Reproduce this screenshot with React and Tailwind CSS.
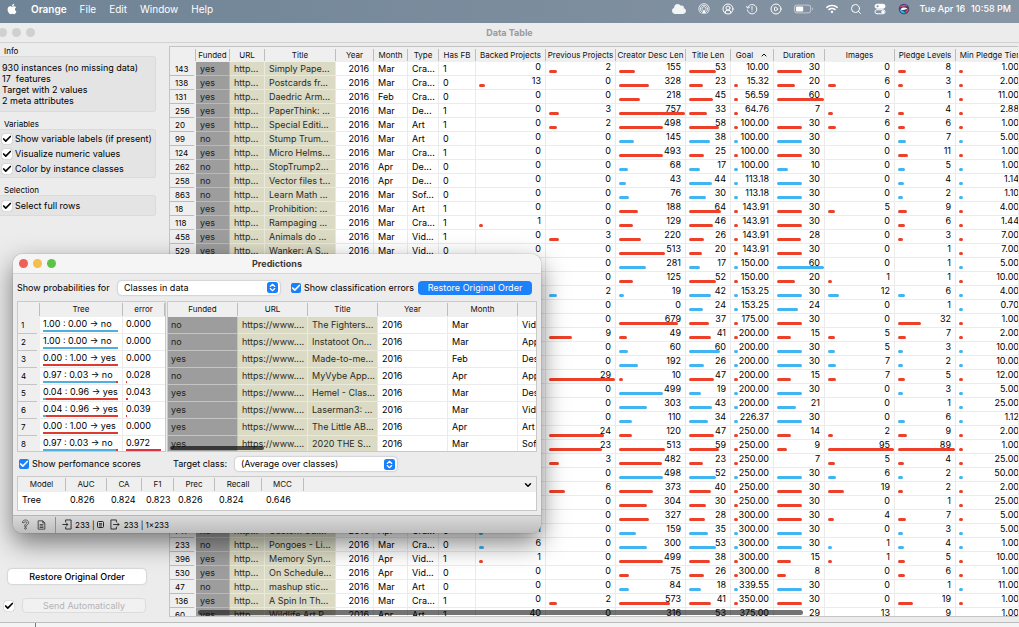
import React from 'react';
import { FaApple, FaCloud, FaWifi } from 'react-icons/fa';
import { Search, CirclePlay, CircleUserRound, Check, ChevronDown, ChevronUp } from 'lucide-react';

const RED = 'bg-[#ee4028]';
const BLUE = 'bg-[#41b4f2]';

// [backed, previous, creator length, title length, goal, duration, images, pledge levels, min tier, class]
const NUMBERS = [
  [0, 2, 155, 53, '10.00', 30, 0, 8, '1.00', 'r'],
  [13, 0, 328, 23, '15.32', 20, 6, 3, '2.00', 'r'],
  [0, 0, 218, 45, '56.59', 60, 0, 1, '11.00', 'r'],
  [0, 3, 757, 33, '64.76', 7, 2, 4, '2.88', 'r'],
  [0, 2, 498, 58, '100.00', 30, 6, 6, '1.00', 'r'],
  [0, 0, 145, 38, '100.00', 30, 0, 7, '5.00', 'b'],
  [0, 0, 493, 25, '100.00', 30, 0, 11, '1.00', 'r'],
  [0, 0, 68, 17, '100.00', 10, 0, 5, '1.00', 'b'],
  [0, 0, 43, 44, '113.18', 30, 0, 4, '1.14', 'b'],
  [0, 0, 76, 30, '113.18', 30, 0, 2, '1.10', 'b'],
  [0, 0, 188, 64, '143.91', 30, 5, 9, '4.00', 'r'],
  [1, 0, 129, 46, '143.91', 30, 0, 6, '1.44', 'r'],
  [0, 3, 220, 26, '143.91', 28, 0, 3, '7.00', 'r'],
  [0, 0, 513, 20, '143.91', 30, 0, 1, '7.00', 'r'],
  ['', 0, 281, 17, '150.00', 60, 0, 1, '5.00', 'b'],
  ['', 0, 125, 52, '150.00', 20, 1, 1, '10.00', 'r'],
  ['', 2, 19, 42, '153.25', 30, 12, 6, '4.00', 'b'],
  ['', 0, 0, 24, '153.25', 24, 0, 1, '0.70', 'b'],
  ['', 0, 679, 37, '175.00', 30, 0, 32, '1.00', 'r'],
  ['', 9, 49, 41, '200.00', 15, 5, 7, '2.00', 'r'],
  ['', 0, 60, 60, '200.00', 30, 5, 3, '10.00', 'b'],
  ['', 0, 192, 26, '200.00', 30, 7, 2, '10.00', 'b'],
  ['', 29, 10, 47, '200.00', 15, 7, 5, '12.00', 'r'],
  ['', 0, 499, 19, '200.00', 30, 0, 3, '5.00', 'b'],
  ['', 0, 303, 43, '200.00', 21, 0, 1, '25.00', 'b'],
  ['', 0, 110, 34, '226.37', 30, 0, 6, '1.12', 'b'],
  ['', 24, 120, 47, '250.00', 14, 2, 9, '2.00', 'r'],
  ['', 23, 513, 59, '250.00', 9, 95, 89, '1.00', 'r'],
  ['', 3, 482, 23, '250.00', 7, 5, 4, '25.00', 'r'],
  ['', 0, 498, 52, '250.00', 30, 6, 2, '50.00', 'b'],
  ['', 6, 373, 40, '250.00', 30, 19, 2, '2.00', 'r'],
  ['', 0, 304, 30, '250.00', 30, 0, 1, '25.00', 'r'],
  ['', 0, 327, 28, '300.00', 30, 4, 7, '5.00', 'r'],
  [1, 0, 159, 35, '300.00', 30, 0, 3, '5.00', 'b'],
  [6, 0, 300, 53, '300.00', 30, 1, 4, '1.00', 'b'],
  [1, 0, 499, 38, '300.00', 15, 1, 5, '10.00', 'r'],
  [0, 0, 75, 26, '300.00', 8, 0, 6, '1.00', 'r'],
  [0, 0, 84, 18, '339.55', 30, 0, 1, '11.00', 'b'],
  [0, 2, 573, 41, '350.00', 30, 0, 19, '1.00', 'r'],
  [40, 0, 316, 53, '375.00', 29, 13, 9, '1.00', 'r'],
];

// Row index -> [number, funded, url, title, year, month, type, has FB]
const LABELS = {
  0: ['143', 'yes', 'http...', 'Simply Pape...', '2016', 'Mar', 'Cra...', '1'],
  1: ['138', 'yes', 'http...', 'Postcards fr...', '2016', 'Mar', 'Cra...', '0'],
  2: ['131', 'yes', 'http...', 'Daedric Arm...', '2016', 'Feb', 'Cra...', '0'],
  3: ['256', 'yes', 'http...', 'PaperThink: ...', '2016', 'Mar', 'De...', '1'],
  4: ['20', 'yes', 'http...', 'Special Editi...', '2016', 'Mar', 'Art', '1'],
  5: ['99', 'no', 'http...', 'Stump Trum...', '2016', 'Mar', 'Art', '0'],
  6: ['124', 'yes', 'http...', 'Micro Helms...', '2016', 'Mar', 'Cra...', '1'],
  7: ['262', 'no', 'http...', 'StopTrump2...', '2016', 'Apr', 'De...', '0'],
  8: ['258', 'no', 'http...', 'Vector files t...', '2016', 'Apr', 'De...', '0'],
  9: ['863', 'no', 'http...', 'Learn Math ...', '2016', 'Mar', 'Sof...', '0'],
  10: ['18', 'yes', 'http...', 'Prohibition: ...', '2016', 'Mar', 'Art', '1'],
  11: ['118', 'yes', 'http...', 'Rampaging ...', '2016', 'Mar', 'Cra...', '1'],
  12: ['458', 'yes', 'http...', 'Animals do ...', '2016', 'Mar', 'Vid...', '1'],
  13: ['529', 'yes', 'http...', 'Wanker: A S...', '2016', 'Mar', 'Vid...', '0'],
  33: ['747', 'no', 'http...', 'Custom Gui...', '2016', 'Apr', 'Cra...', '0'],
  34: ['233', 'no', 'http...', 'Pongoes - Li...', '2016', 'Mar', 'Cra...', '0'],
  35: ['396', 'yes', 'http...', 'Memory Syn...', '2016', 'Apr', 'Vid...', '1'],
  36: ['530', 'yes', 'http...', 'On Schedule...', '2016', 'Apr', 'Vid...', '0'],
  37: ['47', 'no', 'http...', 'mashup stic...', '2016', 'Mar', 'Art', '0'],
  38: ['136', 'yes', 'http...', 'A Spin In Th...', '2016', 'Mar', 'Cra...', '1'],
  39: ['60', 'yes', 'http...', 'Wildlife Art P...', '2016', 'Apr', 'Art', '1'],
};

// Bar scale per numeric column: lowest value (no bar), highest value, full bar length
const SCALES = [
  [0, 290, 62],
  [0, 29, 62],
  [0, 757, 62],
  [0, 136, 61],
  [10, 100000, 35],
  [7, 60, 43],
  [0, 95, 62],
  [1, 89, 53],
  [0, 10000, 62],
];

const COLUMNS = [
  ['', 'w-[26px]'],
  ['Funded', 'w-[34px]'],
  ['URL', 'w-[35px]'],
  ['Title', 'w-[71px]'],
  ['Year', 'w-[38px]'],
  ['Month', 'w-[34px]'],
  ['Type', 'w-[31px]'],
  ['Has FB', 'w-[37px]'],
  ['Backed Projects', 'w-[70px]'],
  ['Previous Projects', 'w-[70px]'],
  ['Creator Desc Len', 'w-[70px]'],
  ['Title Len', 'w-[45px]'],
  ['Goal', 'w-[43px]'],
  ['Duration', 'w-[51px]'],
  ['Images', 'w-[70px]'],
  ['Pledge Levels', 'w-[61px]'],
  ['Min Pledge Tier', 'w-[68px]'],
];

function AirDrop() {
  return (
    <svg viewBox="0 0 24 24" className="size-3" fill="none" stroke="currentColor" strokeWidth="1.6" strokeLinecap="round">
      <path d="M6 20.5A10.5 10.5 0 1 1 18 20.5M7.5 17.5a7.3 7.3 0 1 1 9 0M9.3 14.8a4.2 4.2 0 1 1 5.4 0" />
      <path d="M12 13l4.5 8h-9z" fill="currentColor" stroke="none" />
    </svg>
  );
}

function TimeMachine() {
  return (
    <svg viewBox="0 0 24 24" className="size-3" fill="none" stroke="currentColor" strokeWidth="1.8" strokeLinecap="round">
      <path d="M3.5 9A9.3 9.3 0 1 1 3 14" strokeDasharray="3 1.2" />
      <path d="M1 7l2.5 3.5L7 8.5M12 7v6M12 16v.5" />
    </svg>
  );
}

function Battery() {
  return (
    <svg viewBox="0 0 36 18" className="h-2.5 w-5" fill="none">
      <rect x="1" y="2" width="29" height="14" rx="4" stroke="currentColor" strokeOpacity=".6" strokeWidth="1.6" />
      <rect x="3.5" y="4.5" width="13" height="9" rx="2" fill="currentColor" />
      <path d="M32.5 6.5c2 .7 2 4.3 0 5z" fill="currentColor" fillOpacity=".6" />
    </svg>
  );
}

function ControlCenter() {
  return (
    <svg viewBox="0 0 24 24" className="size-3" fill="none" stroke="currentColor" strokeWidth="2">
      <rect x="2" y="2.5" width="20" height="8" rx="4" fill="currentColor" />
      <circle cx="7" cy="6.5" r="2.2" fill="#8392a0" stroke="none" />
      <rect x="2" y="13.5" width="20" height="8" rx="4" />
      <circle cx="17.5" cy="17.5" r="3" fill="currentColor" stroke="none" />
    </svg>
  );
}

function Siri() {
  return (
    <svg viewBox="0 0 24 24" className="size-3">
      <circle cx="12" cy="12" r="10.5" fill="#3c4270" />
      <path d="M3 9c4-7 13-7 17-2-5-1-10 1-17 2z" fill="#e2457c" />
      <path d="M3 13c2 7 9 9 13 7-4-1-5-6-13-7z" fill="#30b7d8" />
      <path d="M21 11c0 5-3 8-6 9 0-4 2-7 6-9z" fill="#e0445a" />
      <path d="M5 13c3-5 9-5 14-2-4 1-6 5-14 2z" fill="#fff" />
    </svg>
  );
}

function MenuBar() {
  return (
    <header className="flex h-[23px] shrink-0 items-center bg-linear-to-r from-[#6f8496] to-[#8795a4] pr-2 pb-[5px] pl-[6px] text-[10px] text-white">
      <FaApple className="size-3" />
      <nav className="ml-[13px] flex gap-[13px]">
        <button className="font-semibold">Orange</button>
        <button>File</button>
        <button>Edit</button>
        <button>Window</button>
        <button>Help</button>
      </nav>
      <div className="ml-auto flex items-center">
        <div className="mr-[10px] flex items-center gap-3">
          <FaCloud className="h-3 w-3.5 opacity-90" />
          <AirDrop />
          <CircleUserRound className="size-3" />
          <TimeMachine />
          <CirclePlay className="size-3" />
          <Battery />
          <FaWifi className="size-3" />
          <Search className="size-3" />
          <ControlCenter />
          <Siri />
        </div>
        <time className="flex gap-1.5 text-[9px] font-medium">
          <span>Tue Apr 16</span>
          <span>10:58 PM</span>
        </time>
      </div>
    </header>
  );
}

function PlainCheck({ id, labelledBy }) {
  return (
    <span className="grid size-[10px] shrink-0">
      <input
        id={id}
        type="checkbox"
        defaultChecked
        aria-labelledby={labelledBy}
        className="[grid-area:1/1] size-[10px] appearance-none rounded-[2px] bg-white shadow-[0_0_1px_rgba(0,0,0,0.5)]"
      />
      <Check className="pointer-events-none [grid-area:1/1] size-[10px] text-black" strokeWidth={4} />
    </span>
  );
}

function BlueCheck({ id }) {
  return (
    <span className="grid size-[10px] shrink-0">
      <input id={id} type="checkbox" defaultChecked className="[grid-area:1/1] size-[10px] appearance-none rounded-[2px] bg-[#1a7ffb]" />
      <Check className="pointer-events-none [grid-area:1/1] size-[10px] text-white" strokeWidth={4} />
    </span>
  );
}

function SideOption({ id, children }) {
  return (
    <div className="flex h-[15px] items-center gap-[3px]">
      <PlainCheck id={id} />
      <label htmlFor={id}>{children}</label>
    </div>
  );
}

function Sidebar() {
  const box = 'rounded-r-[3px] border border-l-0 border-[#dadada] bg-[#e4e4e4] pl-[2px]';
  const heading = 'pl-1 text-[8px] leading-[10px]';
  return (
    <aside className="flex w-[169px] shrink-0 flex-col pt-[3px] pr-[13px] pb-[9px] text-[9px]">
      <h2 className={heading}>Info</h2>
      <div className={`${box} pt-[5px] pb-[5px] leading-[11px]`}>
        <p>930 instances (no missing data)</p>
        <p>17&nbsp; features</p>
        <p>Target with 2 values</p>
        <p>2 meta attributes</p>
      </div>
      <h2 className={`${heading} mt-[7px]`}>Variables</h2>
      <div className={`${box} py-px`}>
        <SideOption id="labels">Show variable labels (if present)</SideOption>
        <SideOption id="visualize">Visualize numeric values</SideOption>
        <SideOption id="color">Color by instance classes</SideOption>
      </div>
      <h2 className={`${heading} mt-[7px]`}>Selection</h2>
      <div className={`${box} py-[2px]`}>
        <SideOption id="fullrows">Select full rows</SideOption>
      </div>
      <div className="mt-auto pr-[10px] pl-1">
        <div className="pl-1">
          <button className="h-[15px] w-full rounded-[4px] bg-white font-medium shadow-[0_0_2px_rgba(0,0,0,0.3)]">Restore Original Order</button>
        </div>
        <div className="mt-[14px] flex items-center gap-2">
          <PlainCheck id="auto" labelledBy="send" />
          <button id="send" disabled className="h-[15px] flex-1 rounded-[4px] border border-[#dcdcdc] bg-[#f1f1f1] text-[#b4b4b4]">
            Send Automatically
          </button>
        </div>
      </div>
    </aside>
  );
}

function NumberCell({ value, scale, kind }) {
  const n = Number(value);
  const [low, high, length] = scale;
  const shown = value !== '' && n > low;
  return (
    <td className="h-[14px] border-r border-b border-[#ebebeb] bg-white p-0">
      <div className="relative h-[13px] pr-[4px] text-right leading-[10px]">
        {shown && (
          <span
            className={`absolute top-2 left-[3px] h-[3px] rounded-full ${kind === 'r' ? RED : BLUE}`}
            style={{ width: Math.round(3.6 + (n / high) * length) }}
          />
        )}
        <span className="relative">{value}</span>
      </div>
    </td>
  );
}

function DataTable() {
  const plain = 'h-[14px] overflow-hidden border-r border-b border-[#ebebeb] bg-white p-0 pl-[4px] leading-[13px]';
  const meta = 'h-[14px] overflow-hidden border-r border-b border-[#e9e9dc] bg-[#dadac5] p-0 pl-[4px] leading-[13px] text-[#2c2c26]';
  return (
    <table className="w-[854px] table-fixed border-separate border-spacing-0 text-left text-[9px] whitespace-nowrap">
      <colgroup>
        {COLUMNS.map(([name, width], i) => (
          <col key={i} className={width} />
        ))}
      </colgroup>
      <thead>
        <tr className="text-[8px]">
          {COLUMNS.map(([name], i) => (
            <th key={i} className="h-[15px] bg-[#efefef] p-0 text-center font-normal text-[#111]">
              <div className="flex h-[12px] items-center justify-center gap-[7px] border-r border-[#bdbdbd]">
                {name}
                {name === 'Goal' && <ChevronUp className="size-2" strokeWidth={3} />}
              </div>
            </th>
          ))}
        </tr>
      </thead>
      <tbody>
        {NUMBERS.map((row, i) => {
          const l = LABELS[i] || ['', '', '', '', '', '', '', ''];
          return (
            <tr key={i}>
              <td className="h-[14px] bg-[#efefef] p-0">
                <div className="mr-[2px] h-[14px] border-b border-[#bcbcbc] pl-[5px] text-[8px] leading-[14px]">{l[0]}</div>
              </td>
              <td className="h-[14px] border-r border-b border-[#b9b9b9] bg-[#9d9d9d] p-0 pl-[4px] leading-[13px] text-[#222]">{l[1]}</td>
              <td className={meta}>{l[2]}</td>
              <td className={meta}>{l[3]}</td>
              <td className={`${plain} pr-[4px] text-right`}>{l[4]}</td>
              <td className={plain}>{l[5]}</td>
              <td className={plain}>{l[6]}</td>
              <td className={plain}>{l[7]}</td>
              {SCALES.map((scale, c) => (
                <NumberCell key={c} value={row[c]} scale={scale} kind={row[9]} />
              ))}
            </tr>
          );
        })}
      </tbody>
    </table>
  );
}

function Select({ id, className, option }) {
  return (
    <span className={`grid h-[14px] items-center ${className}`}>
      <select id={id} className="[grid-area:1/1] h-[14px] w-full appearance-none rounded-[4px] bg-white pl-[6px] text-[9px] leading-[14px] shadow-[0_0_2px_rgba(0,0,0,0.35)]">
        <option>{option}</option>
      </select>
      <svg viewBox="0 0 22 22" className="pointer-events-none [grid-area:1/1] mr-[2px] size-[11px] justify-self-end">
        <rect width="22" height="22" rx="5" fill="#1a7ffb" />
        <path d="M6.5 9L11 4.5 15.5 9M6.5 13l4.5 4.5 4.5-4.5" fill="none" stroke="#fff" strokeWidth="2.2" strokeLinecap="round" strokeLinejoin="round" />
      </svg>
    </span>
  );
}

// [left probability, right probability, verdict, error]
const TREE = [
  ['1.00', '0.00', 'no', '0.000'],
  ['1.00', '0.00', 'no', '0.000'],
  ['0.00', '1.00', 'yes', '0.000'],
  ['0.97', '0.03', 'no', '0.028'],
  ['0.04', '0.96', 'yes', '0.043'],
  ['0.04', '0.96', 'yes', '0.039'],
  ['0.00', '1.00', 'yes', '0.000'],
  ['0.97', '0.03', 'no', '0.972'],
];

const CASES = [
  ['no', 'The Fighters...', 'Mar', 'Video'],
  ['no', 'Instatoot On...', 'Mar', 'Apps'],
  ['yes', 'Made-to-me...', 'Feb', 'Design'],
  ['no', 'MyVybe App...', 'Apr', 'Apps'],
  ['yes', 'Hemel - Clas...', 'Mar', 'Design'],
  ['yes', 'Laserman3: ...', 'Mar', 'Video'],
  ['yes', 'The Little AB...', 'Apr', 'Art'],
  ['yes', '2020 THE S...', 'Mar', 'Software'],
];

const SCORES = [
  ['Model', 'Tree', 'w-[48px]'],
  ['AUC', '0.826', 'w-[41px]'],
  ['CA', '0.824', 'w-[35px]'],
  ['F1', '0.823', 'w-[32px]'],
  ['Prec', '0.826', 'w-[41px]'],
  ['Recall', '0.824', 'w-[47px]'],
  ['MCC', '0.646', 'w-[42px]'],
];

function HeadCell({ children }) {
  return (
    <th className="h-[15px] bg-[#efefef] p-0 text-center text-[8px] font-normal text-[#111]">
      <div className="h-[13px] border-r border-[#bdbdbd] leading-[13px]">{children}</div>
    </th>
  );
}

function TreeTable() {
  return (
    <div className="h-[151px] w-[149px] shrink-0 overflow-hidden border border-[#c9c9c9]">
      <table className="w-full table-fixed border-separate border-spacing-0 text-left whitespace-nowrap">
        <colgroup>
          <col className="w-[22px]" />
          <col className="w-[83px]" />
          <col />
        </colgroup>
        <thead>
          <tr>
            <HeadCell />
            <HeadCell>Tree</HeadCell>
            <HeadCell>error</HeadCell>
          </tr>
        </thead>
        <tbody>
          {TREE.map(([left, right, verdict, error], i) => (
            <tr key={i}>
              <td className="h-[17px] bg-[#efefef] p-0">
                <div className="mr-[3px] h-[17px] border-b border-[#c4c4c4] pl-[3px] text-[8px] leading-[16px]">{i + 1}</div>
              </td>
              <td className="h-[17px] border-r border-b border-[#ebebeb] bg-white p-0">
                <div className="h-4 pr-[4px] pl-[3px]">
                  <div className="h-[13px] leading-[13px]">{`${left} : ${right} → ${verdict}`}</div>
                  <div className="flex h-[2px]">
                    <span className="bg-[#4fb0de]" style={{ width: `${Number(left) * 100}%` }} />
                    <span className="flex-1 bg-[#dd3a30]" />
                  </div>
                </div>
              </td>
              <td className="h-[17px] border-b border-[#ebebeb] bg-white p-0">
                <div className="h-4 px-[3px]">
                  <div className="h-[13px] leading-[13px]">{error}</div>
                  <div className="h-[2px] bg-[#dd3040]" style={{ width: `${Number(error) * 100}%` }} />
                </div>
              </td>
            </tr>
          ))}
        </tbody>
      </table>
    </div>
  );
}

function CaseTable() {
  const plain = 'h-[17px] border-r border-b border-[#ebebeb] bg-white p-0 pl-[4px]';
  const meta = 'h-[17px] border-r border-b border-[#e9e9dc] bg-[#dadac5] p-0 pl-[4px] text-[#2c2c26]';
  return (
    <div className="relative h-[151px] min-w-0 flex-1 overflow-hidden border border-[#c9c9c9]">
      <table className="w-[420px] table-fixed border-separate border-spacing-0 text-left leading-[16px] whitespace-nowrap">
        <thead>
          <tr>
            <HeadCell>Funded</HeadCell>
            <HeadCell>URL</HeadCell>
            <HeadCell>Title</HeadCell>
            <HeadCell>Year</HeadCell>
            <HeadCell>Month</HeadCell>
            <HeadCell />
          </tr>
        </thead>
        <tbody>
          {CASES.map(([funded, title, month, type], i) => (
            <tr key={i}>
              <td className="h-[17px] border-r border-b border-[#c4c4c4] bg-[#9d9d9d] p-0 pl-[3px] text-[#222]">{funded}</td>
              <td className={meta}>https://www....</td>
              <td className={meta}>{title}</td>
              <td className={plain}>2016</td>
              <td className={plain}>{month}</td>
              <td className={plain}>{type}</td>
            </tr>
          ))}
        </tbody>
      </table>
      <div className="absolute bottom-px left-[2px] h-[4px] w-[94px] rounded-full bg-black/65" />
    </div>
  );
}

function ScoreTable() {
  return (
    <div className="flex h-[35px] border border-[#c9c9c9] bg-white">
      <table className="h-[31px] w-[286px] table-fixed border-separate border-spacing-0 text-left leading-[16px]">
        <colgroup>
          {SCORES.map(([name, , width]) => (
            <col key={name} className={width} />
          ))}
        </colgroup>
        <thead>
          <tr>
            {SCORES.map(([name]) => (
              <HeadCell key={name}>{name}</HeadCell>
            ))}
          </tr>
        </thead>
        <tbody>
          <tr>
            {SCORES.map(([name, value]) => (
              <td key={name} className="p-0 pl-[4px] align-top">
                {value}
              </td>
            ))}
          </tr>
        </tbody>
      </table>
      <div className="flex h-[15px] flex-1 items-center justify-end bg-[#efefef] pr-[3px]">
        <button aria-label="Columns">
          <ChevronDown className="size-[10px]" strokeWidth={3.5} />
        </button>
      </div>
    </div>
  );
}

function StatusBar() {
  return (
    <footer className="mt-[4px] flex h-[18px] items-center border-t border-[#b5b5b5] bg-linear-to-b from-[#d9d9d9] to-[#bdbdbd] pl-[8px] text-[8px]">
      <button aria-label="Help">
        <svg viewBox="0 0 20 24" className="h-[11px] w-[9px]" fill="none" stroke="#333" strokeWidth="1.6">
          <path d="M3 8c0-8 14-8 14 0 0 4-5 4-5 8H8c0-6 5-5 5-8 0-3-6-3-6 0z" />
          <circle cx="10" cy="20.5" r="2" />
        </svg>
      </button>
      <button aria-label="Report" className="ml-[7px]">
        <svg viewBox="0 0 20 24" className="h-[10px] w-[9px]" fill="none" stroke="#333" strokeWidth="2">
          <path d="M2 2h11l5 5v15H2zM13 2v5h5M5.5 11h9M5.5 14.5h9M5.5 18h9" />
        </svg>
      </button>
      <span className="ml-[9px] h-4 border-l border-[#8f8f8f]" />
      <svg viewBox="0 0 22 24" className="ml-[6px] h-[11px] w-[10px]" fill="none" stroke="#222" strokeWidth="2">
        <path d="M8 7V2h12v20H8v-5M1 12h12M9 8l4 4-4 4" />
      </svg>
      <span className="ml-[3px]">233 |</span>
      <svg viewBox="0 0 14 14" className="ml-[2px] size-[7px]" fill="none" stroke="#222" strokeWidth="2">
        <rect x="1" y="1" width="12" height="12" rx="2" />
        <path d="M4 5h6M4 7.5h6M4 10h6" strokeWidth="1.5" />
      </svg>
      <svg viewBox="0 0 22 24" className="ml-[6px] h-[11px] w-[10px]" fill="none" stroke="#222" strokeWidth="2">
        <path d="M14 7V2H2v20h12v-5M7 12h13M16 8l4 4-4 4" />
      </svg>
      <span className="ml-[4px]">233 | 1×233</span>
    </footer>
  );
}

function Predictions() {
  return (
    <section className="absolute top-[254px] left-[13px] w-[528px] overflow-hidden rounded-[9px] bg-[#ececec] text-[9px] shadow-[0_0_1px_rgba(0,0,0,0.6),0_10px_26px_rgba(0,0,0,0.5)]">
      <div className="grid h-5 grid-cols-[1fr_auto_1fr] items-center border-b border-[#d6d6d6] bg-[#f5f5f5]">
        <div className="flex gap-[5px] pl-[6px]">
          <span className="size-[9px] rounded-full bg-[#ec6259]" />
          <span className="size-[9px] rounded-full bg-[#f4bd4e]" />
          <span className="size-[9px] rounded-full bg-[#5bc446]" />
        </div>
        <h1 className="text-[9px] font-bold text-[#3a3a3a]">Predictions</h1>
      </div>
      <div className="px-[4px]">
        <div className="flex h-[27px] items-center">
          <label htmlFor="probabilities" className="w-[101px]">
            Show probabilities for
          </label>
          <Select id="probabilities" option="Classes in data" className="w-[162px]" />
          <span className="ml-[11px] flex items-center gap-[3px]">
            <BlueCheck id="errors" />
            <label htmlFor="errors">Show classification errors</label>
          </span>
          <button className="ml-auto mr-[5px] h-[14px] w-[114px] rounded-[4px] bg-[#1b82fb] text-white">Restore Original Order</button>
        </div>
        <div className="flex gap-px">
          <TreeTable />
          <CaseTable />
        </div>
        <div className="flex h-[24px] items-center pl-[2px]">
          <BlueCheck id="scores" />
          <label htmlFor="scores" className="ml-[3px] w-[141px]">
            Show perfomance scores
          </label>
          <label htmlFor="target" className="w-[62px]">
            Target class:
          </label>
          <Select id="target" option="(Average over classes)" className="w-[162px]" />
        </div>
        <ScoreTable />
      </div>
      <StatusBar />
    </section>
  );
}

export default function App() {
  return (
    <div className="relative flex h-screen flex-col overflow-hidden bg-[#ececec] font-['Inter','Liberation_Sans',sans-serif] text-black">
      <MenuBar />
      <div className="grid h-[20px] shrink-0 grid-cols-[1fr_auto_1fr] items-center border-b border-[#d2d2d2]">
        <div className="-ml-[2px] flex gap-[5px]">
          <span className="size-[9px] rounded-full bg-[#d0d0d0]" />
          <span className="size-[9px] rounded-full bg-[#d0d0d0]" />
          <span className="size-[9px] rounded-full bg-[#d0d0d0]" />
        </div>
        <h1 className="text-[9px] font-bold text-[#9b9b9b]">Data Table</h1>
      </div>
      <div className="flex min-h-0 flex-1">
        <Sidebar />
        <main className="relative mt-[3px] mr-px mb-[5px] min-w-0 flex-1 overflow-hidden border border-r-0 border-[#c4c4c4]">
          <DataTable />
          <div className="absolute right-[215px] bottom-px left-[28px] h-[5px] rounded-full bg-black/55" />
        </main>
      </div>
      <footer className="h-[5px] shrink-0 border-t border-[#bdbdbd] bg-[#f4f4f4]">
        <div className="ml-[35px] h-full border-l border-[#777]" />
      </footer>
      <Predictions />
    </div>
  );
}
